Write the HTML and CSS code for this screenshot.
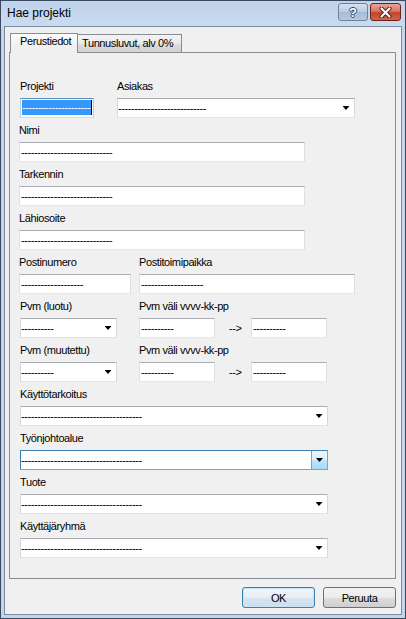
FILE: index.html
```html
<!DOCTYPE html>
<html lang="fi">
<head>
  <meta charset="UTF-8" />
  <title>Hae projekti</title>
  <link rel="stylesheet" href="styles.css">
</head>
<body>
  <div class="window">
    <div class="titlebar">
      <span class="title">Hae projekti</span>
      <div class="caption-btn help">?</div>
      <div class="caption-btn close">
        <svg width="13" height="11" viewBox="0 0 13 11">
          <path d="M2.5 1.5 L10.5 9.5 M10.5 1.5 L2.5 9.5" stroke="#4a1d15" stroke-width="4" stroke-linecap="round"/>
          <path d="M2.5 1.5 L10.5 9.5 M10.5 1.5 L2.5 9.5" stroke="#fff" stroke-width="2.2" stroke-linecap="round"/>
        </svg>
      </div>
    </div>

    <div class="client">
      <div class="tabs">
        <div class="tab active">Perustiedot</div>
        <div class="tab">Tunnusluvut, alv 0%</div>
      </div>

      <div class="panel">
        <div class="row">
          <div class="field projekti">
            <label>Projekti</label>
            <div class="text focus"><span class="sel">---------------------</span></div>
          </div>
          <div class="field asiakas">
            <label>Asiakas</label>
            <div class="combo"><span class="val">---------------------------</span><span class="drop"><i class="arrow"></i></span></div>
          </div>
        </div>

        <div class="row">
          <div class="field wide">
            <label>Nimi</label>
            <div class="text">----------------------------</div>
          </div>
        </div>

        <div class="row">
          <div class="field wide">
            <label>Tarkennin</label>
            <div class="text">----------------------------</div>
          </div>
        </div>

        <div class="row">
          <div class="field wide">
            <label>Lähiosoite</label>
            <div class="text">----------------------------</div>
          </div>
        </div>

        <div class="row">
          <div class="field postinumero">
            <label>Postinumero</label>
            <div class="text">-------------------</div>
          </div>
          <div class="field postitoimipaikka">
            <label>Postitoimipaikka</label>
            <div class="text">-------------------</div>
          </div>
        </div>

        <div class="row">
          <div class="field pvm">
            <label>Pvm (luotu)</label>
            <div class="combo"><span class="val">----------</span><span class="drop"><i class="arrow"></i></span></div>
          </div>
          <div class="field range">
            <label>Pvm väli vvvv-kk-pp</label>
            <div class="range-inputs">
              <div class="text date">----------</div>
              <span class="to">--&gt;</span>
              <div class="text date">----------</div>
            </div>
          </div>
        </div>

        <div class="row">
          <div class="field pvm">
            <label>Pvm (muutettu)</label>
            <div class="combo"><span class="val">----------</span><span class="drop"><i class="arrow"></i></span></div>
          </div>
          <div class="field range">
            <label>Pvm väli vvvv-kk-pp</label>
            <div class="range-inputs">
              <div class="text date">----------</div>
              <span class="to">--&gt;</span>
              <div class="text date">----------</div>
            </div>
          </div>
        </div>

        <div class="row">
          <div class="field full">
            <label>Käyttötarkoitus</label>
            <div class="combo"><span class="val">-------------------------------------</span><span class="drop"><i class="arrow"></i></span></div>
          </div>
        </div>

        <div class="row">
          <div class="field full">
            <label>Työnjohtoalue</label>
            <div class="combo focus"><span class="val">-------------------------------------</span><span class="drop"><i class="arrow"></i></span></div>
          </div>
        </div>

        <div class="row">
          <div class="field full">
            <label>Tuote</label>
            <div class="combo"><span class="val">-------------------------------------</span><span class="drop"><i class="arrow"></i></span></div>
          </div>
        </div>

        <div class="row">
          <div class="field full">
            <label>Käyttäjäryhmä</label>
            <div class="combo"><span class="val">-------------------------------------</span><span class="drop"><i class="arrow"></i></span></div>
          </div>
        </div>
      </div>

      <div class="buttons">
        <button class="btn default">OK</button>
        <button class="btn">Peruuta</button>
      </div>
    </div>
  </div>
</body>
</html>
```

FILE: styles.css
```css
body {
  margin: 0;
  font-family: "Liberation Sans", Arial, sans-serif;
  font-size: 11px;
  letter-spacing: -0.4px;
  color: #000;
}
.window {
  width: 406px;
  height: 619px;
  box-sizing: border-box;
  border: 1px solid #3b4a5e;
  background: #c3d6ec;
  display: flex;
  flex-direction: column;
}
.titlebar {
  height: 25px;
  display: flex;
  align-items: flex-start;
  padding: 0 4px 0 6px;
  background: linear-gradient(to bottom, #bfd3ec, #cadbef);
}
.title {
  font-size: 12px;
  letter-spacing: 0;
  line-height: 14px;
  margin-top: 5px;
}
.caption-btn {
  box-sizing: border-box;
  height: 18px;
  margin-top: 2px;
  border-radius: 3px;
  display: flex;
  align-items: center;
  justify-content: center;
}
.help {
  width: 30px;
  margin-left: auto;
  margin-right: 2px;
  border: 1px solid #6f819b;
  background: linear-gradient(to bottom, #d3e0f0 0%, #b9cce4 50%, #a4bad8 51%, #b6c9e2 100%);
  color: #fff;
  font-size: 13px;
  font-weight: bold;
  letter-spacing: 0;
  text-shadow: 1px 0 #34465f, -1px 0 #34465f, 0 1px #34465f, 0 -1px #34465f;
}
.close {
  width: 31px;
  border: 1px solid #6b2418;
  background: linear-gradient(to bottom, #e8a597 0%, #d8765f 45%, #c4412a 55%, #d3664d 100%);
}
.client {
  flex: 1;
  margin: 0 3px 3px;
  border: 1px solid #7a8ba2;
  background: #f0f0f0;
  padding: 6px 5px 6px 4px;
  display: flex;
  flex-direction: column;
}
.tabs {
  display: flex;
  align-items: flex-end;
  padding-left: 1px;
}
.tab {
  box-sizing: border-box;
  border: 1px solid #898c95;
  border-bottom: none;
  line-height: 13px;
  white-space: nowrap;
}
.tab.active {
  width: 68px;
  height: 20px;
  margin-bottom: -1px;
  padding: 1px 0 0 9px;
  background: linear-gradient(to bottom, #fdfdfd, #f0f0f0 60%);
  position: relative;
  z-index: 1;
}
.tab:not(.active) {
  width: 105px;
  height: 18px;
  margin-left: -1px;
  padding: 2px 0 0 4px;
  background: linear-gradient(to bottom, #f3f3f3 0%, #ebebeb 50%, #dddddd 51%, #d2d2d2 100%);
}
.panel {
  flex: 1;
  border: 1px solid #898c95;
  background: #f0f0f0;
  padding: 27px 0 0 9px;
  display: flex;
  flex-direction: column;
  gap: 6px;
}
.row {
  display: flex;
  align-items: flex-start;
}
.field {
  display: flex;
  flex-direction: column;
}
.field label {
  line-height: 13px;
  height: 13px;
  margin-bottom: 5px;
  white-space: nowrap;
}
.text, .combo {
  box-sizing: border-box;
  height: 20px;
  background: #fff;
  border: 1px solid;
  line-height: 18px;
  white-space: nowrap;
  overflow: hidden;
}
.text {
  border-color: #abadb3 #dbdfe6 #e3e9ef #e2e3ea;
  padding-left: 1px;
}
.text.focus {
  border-color: #5c93bc #b5cfe7 #c7e2f1 #b5cfe7;
  padding: 1px 0 0 1px;
}
.sel {
  display: inline-block;
  vertical-align: top;
  width: 70px;
  height: 15px;
  line-height: 15px;
  background: #3399ff;
  color: #fff;
  border-right: 1px solid #000;
  box-sizing: border-box;
}
.combo {
  border-color: #a9abb1 #d5d8de #dfe3e8 #d5d8de;
  display: flex;
}
.combo .val {
  flex: 1;
  overflow: hidden;
}
.drop {
  width: 14px;
  margin-right: 1px;
  display: flex;
  align-items: center;
  justify-content: center;
}
.arrow {
  width: 7px;
  height: 4px;
  background: #000;
  clip-path: polygon(0 0, 100% 0, 50% 100%);
}
.combo.focus {
  border-color: #3c7fb1 #7da2ce #7da2ce #3c7fb1;
}
.combo.focus .drop {
  width: 15px;
  margin-right: 0;
  border-left: 1px solid #7da2ce;
  background: linear-gradient(to bottom, #eaf6fd 0%, #d9f0fc 50%, #bee6fd 51%, #a7d9f5 100%);
}

.projekti { margin-left: 1px; width: 74px; }
.asiakas { margin-left: 23px; width: 238px; }
.wide { width: 286px; }
.postinumero { width: 112px; }
.postitoimipaikka { margin-left: 8px; width: 216px; }
.pvm { margin-left: 1px; width: 97px; }
.range { margin-left: 22px; }
.full { margin-left: 1px; width: 308px; }

.range-inputs {
  display: flex;
}
.date {
  width: 76px;
}
.to {
  box-sizing: border-box;
  width: 36px;
  padding-left: 14px;
  line-height: 20px;
}
.buttons {
  display: flex;
  justify-content: flex-end;
  gap: 8px;
  margin-top: 8px;
}
.btn {
  width: 73px;
  height: 21px;
  padding: 0;
  border: 1px solid #707070;
  border-radius: 3px;
  background: linear-gradient(to bottom, #f2f2f2 0%, #ebebeb 50%, #dddddd 51%, #cfcfcf 100%);
  font-family: "Liberation Sans", Arial, sans-serif;
  font-size: 11px;
  letter-spacing: -0.4px;
  color: #000;
}
.btn.default {
  border-color: #3c7fb1;
  box-shadow: inset 0 0 0 1px #c6e3f7;
  background: linear-gradient(to bottom, #f1f6fa 0%, #e6eef5 50%, #d7e4ef 51%, #cfdeeb 100%);
}
```
